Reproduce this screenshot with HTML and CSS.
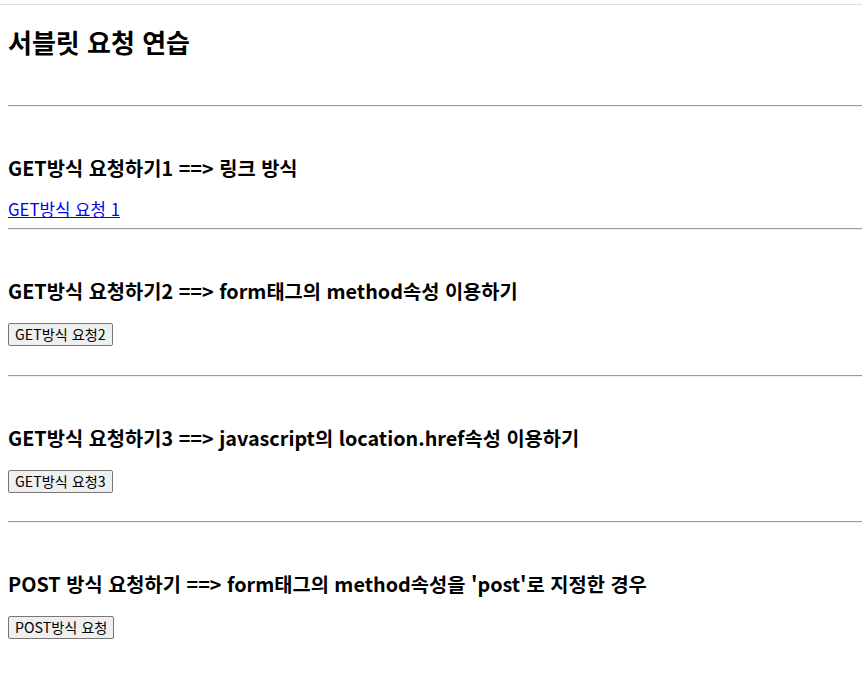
FILE: index.html
```html
<!DOCTYPE html>
<html lang="ko">
<head>
<meta charset="utf-8">
<title>서블릿 요청 연습</title>
<link rel="stylesheet" href="styles.css">
</head>
<body>
<div class="topline"></div>
<main class="page">
  <h2 class="title">서블릿 요청 연습</h2>
  <hr class="rule">
  <section class="sec">
    <h3 class="sec-title">GET방식 요청하기1 ==&gt; 링크 방식</h3>
    <div class="sec-body sec-body--link"><a class="link" href="#">GET방식 요청 1</a></div>
  </section>
  <hr class="rule">
  <section class="sec">
    <h3 class="sec-title">GET방식 요청하기2 ==&gt; form태그의 method속성 이용하기</h3>
    <form class="sec-body"><button class="btn" type="button">GET방식 요청2</button></form>
  </section>
  <hr class="rule">
  <section class="sec">
    <h3 class="sec-title">GET방식 요청하기3 ==&gt; javascript의 location.href속성 이용하기</h3>
    <div class="sec-body"><button class="btn" type="button">GET방식 요청3</button></div>
  </section>
  <hr class="rule rule--tight">
  <section class="sec">
    <h3 class="sec-title">POST 방식 요청하기 ==&gt; form태그의 method속성을 'post'로 지정한 경우</h3>
    <form class="sec-body"><button class="btn" type="button">POST방식 요청</button></form>
  </section>
</main>
</body>
</html>
```

FILE: styles.css
```css
html, body {
  margin: 0;
  padding: 0;
  background: #ffffff;
}
body {
  font-family: "Noto Sans CJK KR", "Noto Sans", sans-serif;
  font-size: 16px;
  line-height: 21px;
  color: #000000;
}
.topline {
  margin-top: 4px;
  height: 1px;
  background: #dedede;
}
.page {
  padding: 0 0 0 8px;
  display: flex;
  flex-direction: column;
}
.title {
  margin: 21px 0 47px;
  font-size: 26px;
  line-height: 32px;
  font-weight: 700;
}
.rule {
  margin: 0;
  height: 0;
  border: 0;
  border-top: 1px solid #9a9a9a;
  border-bottom: 1px solid #eeeeee;
}
.rule--tight {
  margin-top: -1px;
}
.sec {
  display: flex;
  flex-direction: column;
  align-items: flex-start;
}
.sec-title {
  margin: 48px 0 19px;
  font-size: 19.8px;
  line-height: 25px;
  font-weight: 700;
}
.sec-body {
  margin: 0 0 29px;
  line-height: 23px;
}
.sec-body--link {
  margin-bottom: 8px;
  font-size: 16.8px;
  line-height: 21px;
}
.link {
  color: #0000ee;
  text-decoration: underline;
}
.btn {
  font-family: "Noto Sans CJK KR", "Noto Sans", sans-serif;
  font-size: 14.2px;
  line-height: 19px;
  height: 23px;
  padding: 0 6px;
  background: #efefef;
  border: 1px solid #767676;
  border-radius: 2px;
  color: #000000;
}
```
